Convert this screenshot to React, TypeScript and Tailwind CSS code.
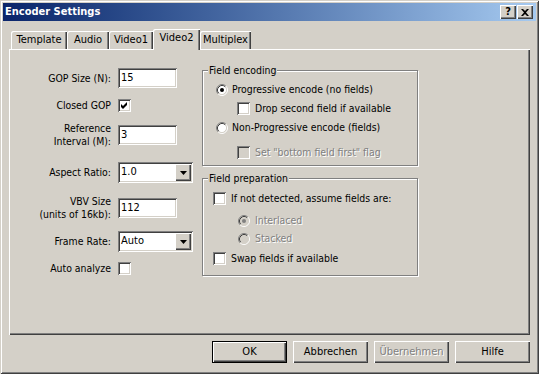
import React from 'react';

const FONT = "font-['DejaVu_Sans_Condensed','Liberation_Sans',Arial,sans-serif]";
const SUNKEN = 'shadow-[inset_1px_1px_#808080,inset_-1px_-1px_#fff,inset_2px_2px_#404040,inset_-2px_-2px_#d4d0c8]';
const RAISED = 'shadow-[inset_1px_1px_#fff,inset_-1px_-1px_#404040,inset_-2px_-2px_#808080]';
const DISABLED_TEXT = 'text-[#808080] [text-shadow:1px_1px_0_#fff]';

function Check({ checked = false, disabled = false }: { checked?: boolean; disabled?: boolean }) {
    return (
        <div className={`w-[13px] h-[13px] shrink-0 ${SUNKEN} ${disabled ? 'bg-[#d4d0c8]' : 'bg-white'}`}>
            {checked && (
                <svg width="13" height="13" viewBox="0 0 13 13">
                    <path d="M3 5 L5 7 L9 3 L9 6 L5 10 L3 8 Z" fill={disabled ? '#808080' : '#000'} />
                </svg>
            )}
        </div>
    );
}

function Radio({ checked = false, disabled = false }: { checked?: boolean; disabled?: boolean }) {
    return (
        <svg width="12" height="12" viewBox="0 0 12 12" className="shrink-0">
            <circle cx="6" cy="6" r="4.5" fill={disabled ? '#d4d0c8' : '#fff'} />
            <path d="M2.11 9.89 A5.5 5.5 0 0 1 9.89 2.11" stroke="#808080" fill="none" />
            <path d="M9.89 2.11 A5.5 5.5 0 0 1 2.11 9.89" stroke="#fff" fill="none" />
            <path d="M2.82 9.18 A4.5 4.5 0 0 1 9.18 2.82" stroke="#404040" fill="none" />
            <path d="M9.18 2.82 A4.5 4.5 0 0 1 2.82 9.18" stroke="#d4d0c8" fill="none" />
            {checked && <circle cx="6" cy="6" r="2" fill={disabled ? '#808080' : '#000'} />}
        </svg>
    );
}

function Edit({ value }: { value: string }) {
    return (
        <div className={`w-[59px] h-[20px] bg-white ${SUNKEN} flex items-center pl-[3px] text-black text-[11px]`}>{value}</div>
    );
}

function Combo({ value }: { value: string }) {
    return (
        <div className={`w-[75px] h-[21px] bg-white ${SUNKEN} flex items-center justify-between pl-[3px] pr-[2px] text-[11px]`}>
            <span>{value}</span>
            <div className={`w-[16px] h-[17px] bg-[#d4d0c8] ${RAISED} flex items-center justify-center`}>
                <svg width="7" height="4" viewBox="0 0 7 4">
                    <path d="M0 0 H7 L3.5 4 Z" fill="#000" />
                </svg>
            </div>
        </div>
    );
}

function Row({ label, h, mt, children }: { label: React.ReactNode; h: string; mt: string; children: React.ReactNode }) {
    return (
        <div className={`flex items-center gap-[7px] ${h} ${mt}`}>
            <div className="w-[102px] text-right leading-[13px] shrink-0">{label}</div>
            {children}
        </div>
    );
}

function GroupBox({ title, className, children }: { title: string; className: string; children: React.ReactNode }) {
    return (
        <div className={`relative w-[216px] border border-[#808080] shadow-[inset_1px_1px_#fff,1px_1px_#fff] ${className}`}>
            <div className="absolute left-[5px] top-[-8px] px-[1px] bg-[#d4d0c8] leading-[14px]">{title}</div>
            {children}
        </div>
    );
}

function Tab({ label, w, selected = false }: { label: string; w: string; selected?: boolean }) {
    return (
        <div
            className={`${w} flex justify-center items-center rounded-tl-[2px] bg-[#d4d0c8] shadow-[inset_1px_1px_#fff,inset_-1px_0_#404040,inset_-2px_0_#808080] ${
                selected ? 'h-[21px] mb-[-1px] relative z-10 pb-[3px]' : 'h-[18px] pt-[1px]'
            }`}
        >
            {label}
        </div>
    );
}

function Button({ label, isDefault = false, disabled = false }: { label: string; isDefault?: boolean; disabled?: boolean }) {
    return (
        <div className={`w-[75px] h-[22px] ${isDefault ? 'border border-black' : ''}`}>
            <div className={`w-full h-full bg-[#d4d0c8] ${RAISED} flex items-center justify-center ${disabled ? DISABLED_TEXT : ''}`}>
                {label}
            </div>
        </div>
    );
}

export default function App() {
    return (
        <div className={`w-[539px] h-[374px] bg-[#d4d0c8] p-[3px] flex flex-col text-[10.4px] text-black ${FONT} shadow-[inset_1px_1px_#d4d0c8,inset_-1px_-1px_#404040,inset_2px_2px_#fff,inset_-2px_-2px_#808080]`}>
            {/* Title bar */}
            <div className="h-[18px] shrink-0 flex items-center justify-between pl-[2px] pr-[3px] bg-gradient-to-r from-[#0a246a] to-[#a6caf0]">
                <span className="text-white font-bold text-[11px]">Encoder Settings</span>
                <div className="flex gap-[1px]">
                    <div className={`w-[16px] h-[14px] bg-[#d4d0c8] ${RAISED} flex items-center justify-center font-bold text-[11px] leading-none pb-[1px]`}>?</div>
                    <div className={`w-[16px] h-[14px] bg-[#d4d0c8] ${RAISED} flex items-center justify-center`}>
                        <svg width="8" height="7" viewBox="0 0 8 7">
                            <path d="M0 0 H2 L4 2 L6 0 H8 L5 3.5 L8 7 H6 L4 5 L2 7 H0 L3 3.5 Z" fill="#000" />
                        </svg>
                    </div>
                </div>
            </div>

            {/* Tabs */}
            <div className="mt-[8px] mx-[6px] flex flex-col">
                <div className="flex items-end h-[20px] pl-[2px] text-[11px]">
                    <Tab label="Template" w="w-[56px]" />
                    <Tab label="Audio" w="w-[42px]" />
                    <Tab label="Video1" w="w-[44px]" />
                    <Tab label="Video2" w="w-[47px]" selected />
                    <Tab label="Multiplex" w="w-[51px]" />
                </div>
                <div className={`h-[286px] flex items-start ${RAISED}`}>
                    {/* Left column */}
                    <div className="flex flex-col w-[184px]">
                        <Row label="GOP Size (N):" h="h-[20px]" mt="mt-[19px]">
                            <Edit value="15" />
                        </Row>
                        <Row label="Closed GOP" h="h-[13px]" mt="mt-[11px]">
                            <Check checked />
                        </Row>
                        <Row label={<>Reference<br />Interval (M):</>} h="h-[20px]" mt="mt-[13px]">
                            <Edit value="3" />
                        </Row>
                        <Row label="Aspect Ratio:" h="h-[21px]" mt="mt-[17px]">
                            <Combo value="1.0" />
                        </Row>
                        <Row label={<>VBV Size<br />(units of 16kb):</>} h="h-[20px]" mt="mt-[15px]">
                            <Edit value="112" />
                        </Row>
                        <Row label="Frame Rate:" h="h-[21px]" mt="mt-[13px]">
                            <Combo value="Auto" />
                        </Row>
                        <Row label="Auto analyze" h="h-[13px]" mt="mt-[10px]">
                            <Check />
                        </Row>
                    </div>

                    {/* Right column */}
                    <div className="ml-[9px] pt-[21px] flex flex-col gap-[12px]">
                        <GroupBox title="Field encoding" className="h-[96px]">
                            <div className="flex flex-col">
                                <div className="h-[13px] mt-[12px] pl-[13px] flex items-center gap-[4px]">
                                    <Radio checked />
                                    <span>Progressive encode (no fields)</span>
                                </div>
                                <div className="h-[13px] mt-[6px] pl-[34px] flex items-center gap-[5px]">
                                    <Check />
                                    <span>Drop second field if available</span>
                                </div>
                                <div className="h-[13px] mt-[6px] pl-[13px] flex items-center gap-[4px]">
                                    <Radio />
                                    <span>Non-Progressive encode (fields)</span>
                                </div>
                                <div className="h-[13px] mt-[12px] pl-[34px] flex items-center gap-[5px]">
                                    <Check disabled />
                                    <span className={DISABLED_TEXT}>Set "bottom field first" flag</span>
                                </div>
                            </div>
                        </GroupBox>
                        <GroupBox title="Field preparation" className="h-[98px]">
                            <div className="flex flex-col">
                                <div className="h-[13px] mt-[13px] pl-[10px] flex items-center gap-[5px]">
                                    <Check />
                                    <span>If not detected, assume fields are:</span>
                                </div>
                                <div className="h-[13px] mt-[9px] pl-[35px] flex items-center gap-[5px]">
                                    <Radio checked disabled />
                                    <span className={DISABLED_TEXT}>Interlaced</span>
                                </div>
                                <div className="h-[13px] mt-[5px] pl-[35px] flex items-center gap-[5px]">
                                    <Radio disabled />
                                    <span className={DISABLED_TEXT}>Stacked</span>
                                </div>
                                <div className="h-[13px] mt-[7px] pl-[10px] flex items-center gap-[5px]">
                                    <Check />
                                    <span>Swap fields if available</span>
                                </div>
                            </div>
                        </GroupBox>
                    </div>
                </div>
            </div>

            {/* Buttons */}
            <div className="mt-[6px] mr-[6px] flex justify-end gap-[6px] text-[11px]">
                <Button label="OK" isDefault />
                <Button label="Abbrechen" />
                <Button label="Übernehmen" disabled />
                <Button label="Hilfe" />
            </div>
        </div>
    );
}
